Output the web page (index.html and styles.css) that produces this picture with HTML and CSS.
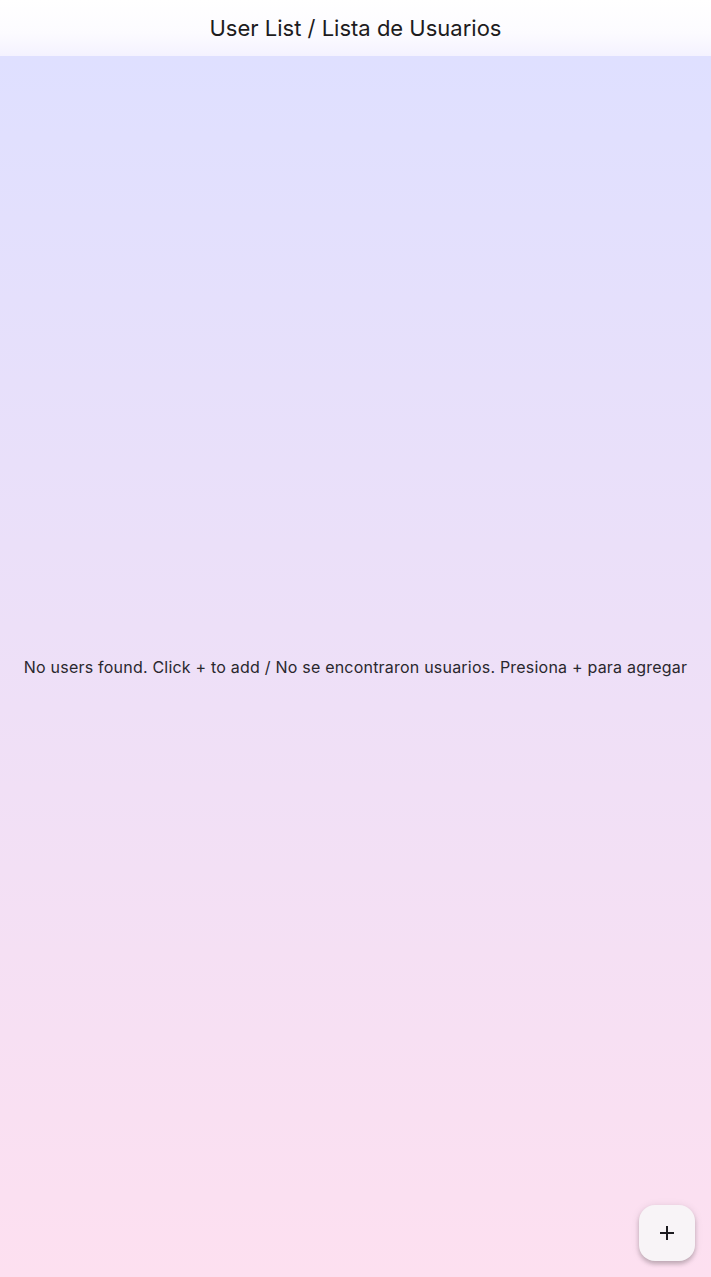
FILE: index.html
```html
<!DOCTYPE html>
<html>
<head>
<meta charset="utf-8">
<link rel="stylesheet" href="styles.css">
</head>
<body>
<div class="app">
  <header class="appbar">
    <h1 class="title">User List / Lista de Usuarios</h1>
  </header>
  <main class="content">
    <p class="empty">No users found. Click + to add / No se encontraron usuarios. Presiona + para agregar</p>
  </main>
  <button class="fab" aria-label="Add">
    <svg width="24" height="24" viewBox="0 0 24 24"><path d="M19 13h-6v6h-2v-6H5v-2h6V5h2v6h6v2z" fill="#1d1b20"/></svg>
  </button>
</div>
</body>
</html>
```
FILE: styles.css
```css
html, body {
  margin: 0;
  padding: 0;
  height: 100%;
}
body {
  font-family: Inter, "Noto Sans", sans-serif;
  color: #1d1b20;
}
.app {
  height: 100vh;
  display: flex;
  flex-direction: column;
  position: relative;
}
.appbar {
  height: 56px;
  flex: none;
  display: flex;
  align-items: center;
  justify-content: center;
  background: linear-gradient(to bottom, #ffffff 0%, #fcfbff 60%, #f4f2ff 100%);
}
.title {
  margin: 0;
  font-size: 22px;
  font-weight: 400;
  line-height: 28px;
  color: #1d1b20;
}
.content {
  flex: 1;
  display: flex;
  align-items: center;
  justify-content: center;
  background: linear-gradient(to bottom, #dfe0ff 0%, #fde0f0 100%);
}
.empty {
  margin: 0;
  font-size: 16px;
  line-height: 24px;
  letter-spacing: 0.21px;
  text-align: center;
  color: #2a282e;
}
.fab {
  position: absolute;
  right: 16px;
  bottom: 16px;
  width: 56px;
  height: 56px;
  border: none;
  border-radius: 16px;
  background: #f8f4f7;
  box-shadow: 0 3px 4px rgba(0,0,0,0.2), 0 1px 8px rgba(0,0,0,0.1);
  display: flex;
  align-items: center;
  justify-content: center;
  padding: 0;
}
```
